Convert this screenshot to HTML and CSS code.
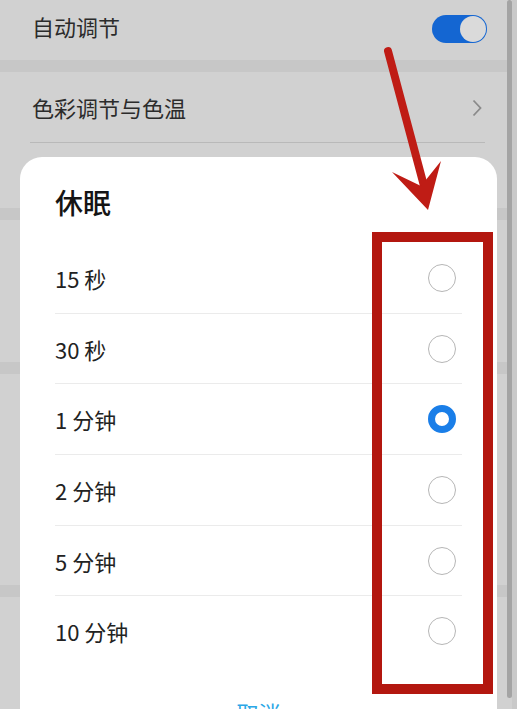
FILE: index.html
```html
<!DOCTYPE html>
<html lang="zh-CN">
  <head>
    <meta charset="UTF-8" />
    <meta name="viewport" content="width=device-width, initial-scale=1.0" />
    <title>休眠</title>
    <link rel="stylesheet" href="styles.css">
  </head>
  <body>
    <div class="screen">
      <!-- 背景设置列表（被弹窗遮罩变暗） -->
      <div class="settings">
        <div class="row row-top">
          <span>自动调节</span>
          <span class="switch"><span class="knob"></span></span>
        </div>
        <div class="band"></div>
        <div class="row row-link">
          <span>色彩调节与色温</span>
          <svg class="chevron" width="10" height="18" viewBox="0 0 10 18">
            <polyline points="1.5,1.5 8.5,9 1.5,16.5" fill="none" stroke="#8a8a8a" stroke-width="1.8" />
          </svg>
        </div>
        <div class="row row-blank-a"></div>
        <div class="band"></div>
        <div class="row row-blank-b"></div>
        <div class="band"></div>
        <div class="row row-blank-c"></div>
        <div class="band"></div>
      </div>

      <div class="scrollbar"></div>

      <!-- 休眠弹窗 -->
      <div class="dialog">
        <h2 class="dialog-title">休眠</h2>
        <ul class="options">
          <li class="option"><span>15 秒</span><span class="radio"></span></li>
          <li class="option"><span>30 秒</span><span class="radio"></span></li>
          <li class="option"><span>1 分钟</span><span class="radio checked"></span></li>
          <li class="option"><span>2 分钟</span><span class="radio"></span></li>
          <li class="option"><span>5 分钟</span><span class="radio"></span></li>
          <li class="option last"><span>10 分钟</span><span class="radio"></span></li>
        </ul>
        <div class="dialog-footer">取消</div>
      </div>

      <!-- 标注：红框与箭头 -->
      <div class="mark-box"></div>
      <svg class="mark-arrow" width="517" height="709" viewBox="0 0 517 709">
        <line x1="388" y1="51" x2="424" y2="186" stroke="#bf1c15" stroke-width="8" stroke-linecap="round" />
        <polygon points="428,210 392,172 421,186 441,161" fill="#bf1c15" />
      </svg>
    </div>
  </body>
</html>
```

FILE: styles.css
```css
body {
  margin: 0;
  font-family: "Noto Sans CJK SC", "Noto Sans", sans-serif;
  background: #d1d1d1;
}

.screen {
  position: relative;
  width: 517px;
  height: 709px;
  overflow: hidden;
  background: #d1d1d1;
}

/* 背景列表 */
.settings {
  width: 507px;
}

.row {
  display: flex;
  align-items: center;
  justify-content: space-between;
  padding: 0 30px 0 32px;
  font-size: 22px;
  color: #2b2b2b;
}

.row-top {
  height: 52px;
  padding-bottom: 8px;
}

.row-link {
  height: 70px;
  padding-right: 25px;
}

.row-blank-a {
  height: 65px;
  border-top: 1px solid #b9b9b9;
  margin: 0 22px 0 30px;
  padding: 0;
}

.row-blank-b {
  height: 142px;
}

.row-blank-c {
  height: 211px;
}

.band {
  height: 12px;
  background: #c7c7c7;
}

.switch {
  position: relative;
  width: 55px;
  height: 28px;
  border-radius: 14px;
  background: #1466d2;
  margin-right: -10px;
  margin-top: 6px;
}

.knob {
  position: absolute;
  right: 1px;
  top: 1px;
  width: 26px;
  height: 26px;
  border-radius: 50%;
  background: #dadada;
}

.chevron {
  margin-top: 2px;
}

.scrollbar {
  position: absolute;
  left: 507px;
  top: 0;
  width: 5px;
  height: 698px;
  border-radius: 3px;
  background: #a4a4a4;
}

.screen::after {
  content: "";
  position: absolute;
  left: 512px;
  top: 0;
  width: 5px;
  height: 100%;
  background: #c9c9c9;
}

/* 弹窗 */
.dialog {
  position: absolute;
  left: 20px;
  top: 157px;
  width: 477px;
  height: 620px;
  box-sizing: border-box;
  padding: 26px 35px 0;
  background: #fff;
  border-radius: 22px;
}

.dialog-title {
  margin: 0 0 22px;
  font-size: 28px;
  line-height: 38px;
  font-weight: 500;
  color: #151515;
}

.options {
  list-style: none;
  margin: 0;
  padding: 0;
}

.option {
  display: flex;
  align-items: center;
  justify-content: space-between;
  height: 69.7px;
  padding-right: 6px;
  border-bottom: 1px solid #ebebeb;
  font-size: 22px;
  color: #222;
}

.option.last {
  border-bottom-color: transparent;
}

.radio {
  width: 28px;
  height: 28px;
  box-sizing: border-box;
  border-radius: 50%;
  border: 1.5px solid #b6b6b6;
}

.radio.checked {
  border: 7px solid #1a7ee8;
}

.dialog-footer {
  margin: 34px -35px 0;
  text-align: center;
  font-size: 22px;
  line-height: 1;
  color: #2aa7e6;
}

/* 标注 */
.mark-box {
  position: absolute;
  left: 372px;
  top: 232px;
  width: 121px;
  height: 462px;
  box-sizing: border-box;
  border: 10px solid #b3170f;
}

.mark-arrow {
  position: absolute;
  left: 0;
  top: 0;
  pointer-events: none;
}
```
